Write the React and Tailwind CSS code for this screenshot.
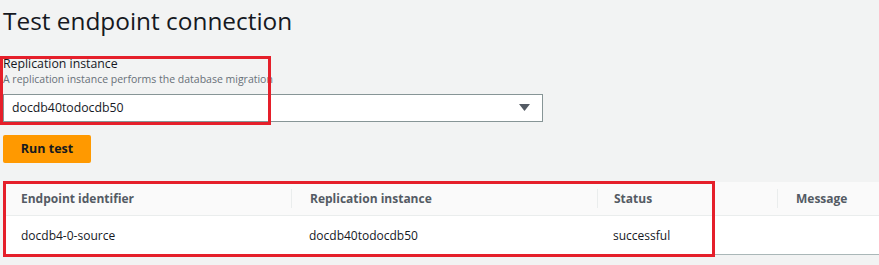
export default function App() {
  const cols = [
    { label: 'Endpoint identifier', w: 'w-[288px]', value: 'docdb4-0-source' },
    { label: 'Replication instance', w: 'w-[306px]', value: 'docdb40todocdb50' },
    { label: 'Status', w: 'w-[180px]', value: 'successful' },
    { label: 'Message', w: 'flex-1', value: '' },
  ]
  return (
    <div className="relative w-[879px] h-[265px] overflow-hidden bg-[#f2f3f3] text-[#16191f] font-['Open_Sans',sans-serif]">
      <h1 className="pl-[3px] pt-[5px] text-[24.4px] leading-[32px] font-normal">Test endpoint connection</h1>
      <div className="pl-[3px] mt-[19px]">
        <div className="text-[12.3px] leading-[16px]">Replication instance</div>
        <div className="text-[10.5px] leading-[15px] text-[#687078]">A replication instance performs the database migration</div>
        <div className="mt-[7px] w-[540px] h-[28px] bg-white border border-[#879596] flex items-center pl-[8px] pr-[12px]">
          <span className="flex-1 text-[12.3px]">docdb40todocdb50</span>
          <svg width="11" height="8" viewBox="0 0 11 8">
            <path d="M0 0h11L5.5 7z" fill="#545b64" />
          </svg>
        </div>
        <button className="mt-[13px] w-[88px] h-[28px] bg-[#ff9900] rounded-[2px] text-[12.5px] font-bold text-[#16191f]">Run test</button>
      </div>
      <div className="ml-[3px] mt-[19px] bg-white border-b border-[#aab7b8]">
        <div className="flex h-[34px] bg-[#fafafa] border-b border-[#eaeded] text-[12px] font-bold text-[#545b64]">
          {cols.map((c, i) => (
            <div key={c.label} className={`${c.w} flex items-center ${i > 0 ? 'border-l border-[#eaeded] my-[7px]' : ''} ${i === 2 ? 'pl-[16px]' : 'pl-[18px]'}`}>
              {c.label}
            </div>
          ))}
        </div>
        <div className="flex h-[38px] text-[12px] pt-[1px]">
          {cols.map((c, i) => (
            <div key={c.label} className={`${c.w} flex items-center ${i === 2 ? 'pl-[16px]' : 'pl-[18px]'}`}>
              {c.value}
            </div>
          ))}
        </div>
      </div>
      <div className="absolute left-0 top-[56px] w-[271px] h-[69px] border-[3px] border-[#e51f2a]" />
      <div className="absolute left-[3px] top-[181px] w-[712px] h-[76px] border-[3px] border-[#e51f2a]" />
    </div>
  )
}
